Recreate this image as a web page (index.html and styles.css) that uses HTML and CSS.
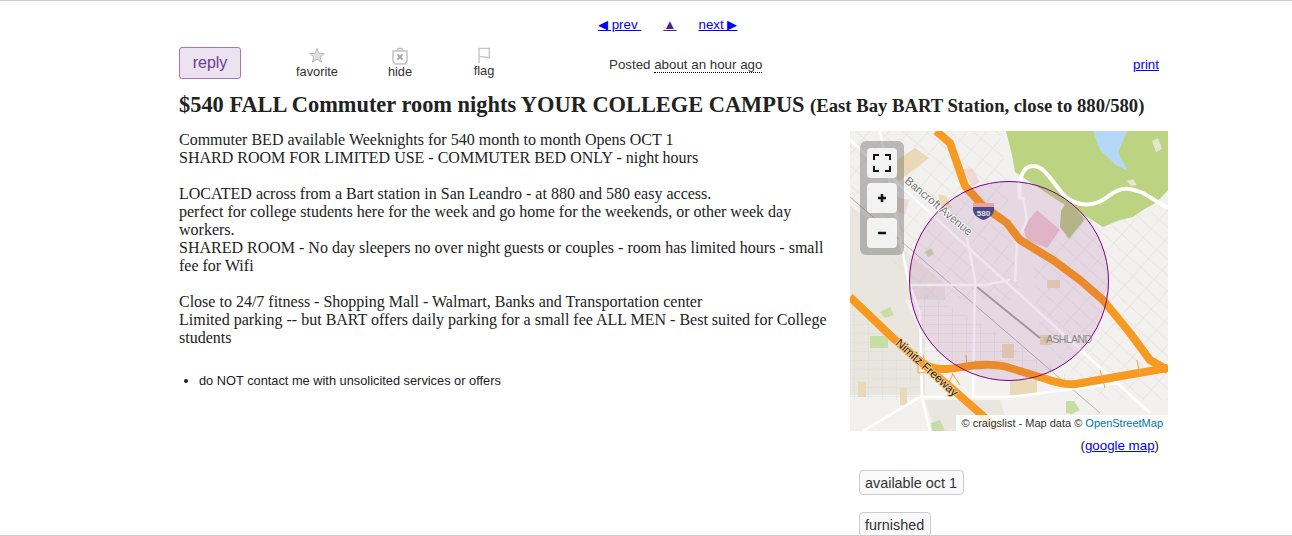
FILE: index.html
```html
<!DOCTYPE html>
<html lang="en">
<head>
<meta charset="utf-8">
<title>$540 FALL Commuter room nights</title>
<link rel="stylesheet" href="styles.css">
</head>
<body>
<div class="page">
  <nav class="prevnext">
    <a href="#" class="nav-prev">◀ prev&nbsp;</a>
    <a href="#" class="nav-up">▲</a>
    <a href="#" class="nav-next">next ▶</a>
  </nav>
  <div class="toolbar">
    <button class="reply">reply</button>
    <div class="tools">
      <div class="tool tool-fav">
        <svg class="tool-icon" viewBox="0 0 18 18"><path class="icon-fill" d="M9 1.500l2.100 5h5.200l-4.100 3.400 1.500 5.400L9 12.200l-4.700 3.100 1.500-5.400L1.700 6.500h5.200z"/></svg>
        <span>favorite</span>
      </div>
      <div class="tool tool-hide">
        <svg class="tool-icon" viewBox="0 0 18 18"><path class="icon-line" d="M2 4h14v10l-2 3H4l-2-3zM6 4l1-2.500h4L12 4"/><path class="icon-x" d="M6.500 7.500l5 5M11.500 7.500l-5 5"/></svg>
        <span>hide</span>
      </div>
      <div class="tool tool-flag">
        <svg class="tool-icon" viewBox="0 0 18 18"><path class="icon-line" d="M3.500 18V1.500h11.500v10.500L3.500 10.500"/></svg>
        <span>flag</span>
      </div>
    </div>
    <div class="posted">Posted <time>about an hour ago</time></div>
    <a href="#" class="print">print</a>
  </div>
  <h1 class="title">$540 FALL Commuter room nights YOUR COLLEGE CAMPUS <small>(East Bay BART Station, close to 880/580)</small></h1>
  <div class="content">
    <div class="body-col">
      <p class="post">Commuter BED available Weeknights for 540 month to month Opens OCT 1<br>
SHARD ROOM FOR LIMITED USE - COMMUTER BED ONLY - night hours<br>
<br>
LOCATED across from a Bart station in San Leandro - at 880 and 580 easy access.<br>
perfect for college students here for the week and go home for the weekends, or other week day workers.<br>
SHARED ROOM - No day sleepers no over night guests or couples - room has limited hours - small fee for Wifi<br>
<br>
Close to 24/7 fitness - Shopping Mall - Walmart, Banks and Transportation center<br>
Limited parking -- but BART offers daily parking for a small fee ALL MEN - Best suited for College students</p>
      <ul class="notices"><li>do NOT contact me with unsolicited services or offers</li></ul>
    </div>
    <aside class="side">
      <div class="map">
        <svg class="map-svg" viewBox="850 131 318 300" aria-label="map">
          <defs>
            <pattern id="grid-a" width="15" height="15" patternUnits="userSpaceOnUse" patternTransform="rotate(40)"><path class="street" d="M0 0H15M0 0V15"/></pattern>
            <pattern id="grid-b" width="14" height="9" patternUnits="userSpaceOnUse"><path class="street" d="M0 0H14M0 0V9"/></pattern>
            <pattern id="grid-c" width="12" height="18" patternUnits="userSpaceOnUse" patternTransform="rotate(-48)"><path class="street" d="M0 0H12M0 0V18"/></pattern>
          </defs>
          <rect class="land" x="850" y="131" width="318" height="300"/>
          <path class="land-dark" d="M850 205L945 285V300H905L925 340V395H850Z"/>
          <path class="land-dark" d="M925 400H1000L1010 431H935Z"/>
          <path class="fill-a" d="M850 131H1000L1020 300L920 300L850 200Z"/>
          <path class="fill-b" d="M850 300L920 360V400H850Z"/>
          <path class="fill-c" d="M1030 230L1168 210V400H1100L1040 340Z"/>
          <path class="fill-b" d="M910 285L1010 340L1090 390L1000 370L930 370Z"/>
          <path class="tan" d="M897 160L915 148L929 158L899 181L897 178Z"/>
          <path class="tan" d="M938 194L946 196L952 208L941 208Z"/>
          <path class="pinkish" d="M893 196L909 200L905 215L893 209Z"/>
          <path class="pinkish" d="M963 169L972 168L980 182L972 187Z"/>
          <path class="tan" d="M858 382H866V397H858Z"/>
          <path class="tan" d="M900 388H907V405H900Z"/>
          <path class="tan" d="M1002 344H1014V358H1002Z"/>
          <path class="tan" d="M1010 380H1037V395H1010Z"/>
          <path class="tan" d="M1040 335H1052V345H1040Z"/>
          <path class="tan" d="M1047 280H1060V288H1047Z"/>
          <path class="park" d="M1006 131H1168V190L1157 202L1143 210L1133 217L1120 220L1103 227L1087 217L1060 202L1015 172L1012 155Z"/>
          <path class="lake" d="M1093 131H1127L1118 153L1128 171L1116 165L1100 150Z"/>
          <path class="sand" d="M1152 141L1158 138L1162 149L1156 152Z"/>
          <path class="sand" d="M1127 181L1133 179L1137 185L1131 186Z"/>
          <path class="park-dark" d="M1061 211L1067 201L1085 219L1069 239L1060 227Z"/>
          <path class="pink" d="M1023 227L1037 210L1060 230L1047 248L1027 240Z"/>
          <path class="park-soft" d="M870 336H888V348H870Z"/>
          <path class="park-soft" d="M880 312L890 307L894 315L885 318Z"/>
          <path class="park-soft" d="M925 252L931 248L934 254L928 257Z"/>
          <path class="park-soft" d="M931 423L940 420L945 431H932Z"/>
          <path class="park-soft" d="M1066 401H1074L1080 410L1072 414L1066 413Z"/>
          <path class="park-soft" d="M1043 337H1048V342H1043Z"/>
          <path class="rail" d="M850 197L1100 413"/>
          <path class="rail-dark" d="M977 287L1040 338"/>
          <path class="road" d="M850 140L1150 413"/>
          <path class="road" d="M880 131L908 280L920 313L922 397L930 431"/>
          <path class="road" d="M967 237L975 280L973 397"/>
          <path class="road" d="M863 431L920 397H1010L1120 383"/>
          <path class="road" d="M910 285H985L1010 280"/>
          <path class="road" d="M1108 302L1150 354"/>
          <path class="road-wide" d="M1020 200C1018 180 1022 166 1033 166C1046 166 1053 185 1067 198C1080 207 1096 207 1110 195C1122 186 1130 188 1143 193L1168 208"/>
          <path class="road" d="M1023 197L1027 220L1017 243L1015 282"/>
          <path class="hwy" d="M936 131L950 143L965 186L983 206L1007 223L1020 240L1053 260L1080 280L1103 300L1130 333L1150 360L1168 370"/>
          <path class="hwy" d="M850 297L893 338L957 393L1000 431"/>
          <path class="hwy" d="M923 363C935 372 950 369 963 367C980 364 1000 364 1010 368L1043 378C1060 384 1068 385 1076 384L1110 378L1168 368"/>
          <path class="ramp" d="M923 355L928 372L918 373V362M966 355L967 368M953 374L945 390M952 373L960 385M1137 360L1140 375M1100 370L1105 388"/>
          <circle class="radius" cx="1009" cy="281" r="99.500"/>
          <g class="shield">
            <path class="shield-top" d="M973 203H994L994 208H973Z"/>
            <path class="shield-body" d="M973 207H994C995 214 990 218 983.500 220C977 218 972 214 973 207Z"/>
            <text class="shield-text" x="983.500" y="216">580</text>
          </g>
          <text class="label-ave" transform="translate(904 182) rotate(40)">Bancroft Avenue</text>
          <text class="label-fwy" transform="translate(895 344) rotate(42)">Nimitz Freeway</text>
          <text class="label-town" x="1046" y="343">ASHLAND</text>
        </svg>
        <div class="zoombar">
          <button class="zoombtn" aria-label="full screen"><svg class="zoomicon" viewBox="0 0 18 18"><path class="corner" d="M1 6V1h5M12 1h5v5M17 12v5h-5M6 17H1v-5"/></svg></button>
          <button class="zoombtn" aria-label="zoom in"><svg class="zoomicon" viewBox="0 0 18 18"><path class="sign" d="M9 5v8M5 9h8"/></svg></button>
          <button class="zoombtn" aria-label="zoom out"><svg class="zoomicon" viewBox="0 0 18 18"><path class="sign" d="M5 9h8"/></svg></button>
        </div>
        <div class="attribution">© craigslist - Map data © <a href="#">OpenStreetMap</a></div>
      </div>
      <div class="gmap">(<a href="#">google map</a>)</div>
      <div class="tags">
        <span class="tag">available oct 1</span>
        <span class="tag">furnished</span>
      </div>
    </aside>
  </div>
</div>
</body>
</html>
```
FILE: styles.css
```css
html, body { margin: 0; padding: 0; background: #fff; }
.page {
  box-sizing: border-box;
  height: 536px;
  overflow: hidden;
  border-top: 1px solid #ccc;
  border-bottom: 1px solid #ccc;
  font-family: "Liberation Sans", Arial, sans-serif;
  color: #222;
  padding: 0 124px 0 179px;
}
a { color: #00f; }
.prevnext {
  display: flex;
  gap: 22px;
  height: 46px;
  padding: 16px 0 0 419px;
  box-sizing: border-box;
  font-size: 13.333px;
  line-height: 16px;
}
.nav-up { color: #551a8b; }
.toolbar { display: flex; height: 32px; font-size: 12.800px; }
.reply {
  box-sizing: border-box;
  width: 62px;
  height: 32px;
  padding: 0;
  border: 1px solid #ab72c4;
  border-radius: 3px;
  background: #ede2f0;
  color: #6a3c8c;
  font: 16px "Liberation Sans", Arial, sans-serif;
}
.tools { display: flex; width: 368px; }
.tool { display: flex; flex-direction: column; align-items: center; line-height: 14px; color: #333; }
.tool-fav { margin-left: 46px; width: 60px; }
.tool-hide { margin-left: 31px; width: 44px; padding-top: 1px; }
.tool-flag { margin-left: 40px; width: 44px; }
.tool-icon { width: 18px; height: 18px; display: block; }
.tool-flag .tool-icon { margin-top: -1px; height: 18px; width: 16px; }
.tool-hide .tool-icon { margin-top: -1px; }
.icon-fill { fill: #e0e0e0; stroke: #bbb; stroke-width: 1; }
.icon-line { fill: none; stroke: #c4c4c4; stroke-width: 1.500; }
.icon-x { fill: none; stroke: #aaa; stroke-width: 2; }
.posted { padding-top: 10px; font-size: 13.333px; line-height: 16px; color: #333; white-space: nowrap; }
.posted time { border-bottom: 1px dotted #000; }
.print { margin-left: auto; margin-right: 9px; padding-top: 10px; font-size: 13.333px; line-height: 16px; }
.title {
  margin: 0;
  padding-top: 14px;
  height: 38px;
  font: bold 22.400px/24px "Liberation Serif", "Times New Roman", serif;
  white-space: nowrap;
  color: #222;
}
.title small { font-size: 18.667px; color: #222; }
.content { display: flex; }
.body-col { width: 671px; }
.post {
  margin: 0;
  width: 650px;
  font: 16px/18px "Liberation Serif", "Times New Roman", serif;
  color: #222;
}
.notices { margin: 25px 0 0; padding-left: 20px; font-size: 12.800px; line-height: 18px; }
.side { width: 318px; flex: none; }
.map { position: relative; width: 318px; height: 300px; overflow: hidden; }
.map-svg { display: block; width: 318px; height: 300px; }
.land { fill: #f2f1ef; }
.land-dark { fill: #e9e6df; }
.fill-a { fill: url(#grid-a); }
.fill-b { fill: url(#grid-b); }
.fill-c { fill: url(#grid-c); }
.street { fill: none; stroke: #dcd9d1; stroke-width: .8; }
.tan { fill: #ead9b6; }
.pinkish { fill: #f1d9d3; }
.park { fill: #bcd382; }
.park-dark { fill: #bcc98b; }
.park-soft { fill: #c6dda4; }
.lake { fill: #b5d8f8; }
.sand { fill: #e6e6cf; }
.pink { fill: #ecc8ce; }
.rail { fill: none; stroke: #b9b6b0; stroke-width: 1; }
.rail-dark { fill: none; stroke: #a8a3a6; stroke-width: 2; }
.road { fill: none; stroke: #fff; stroke-width: 2.500; }
.road-wide { fill: none; stroke: #fff; stroke-width: 4; }
.hwy { fill: none; stroke: #f79a22; stroke-width: 8; stroke-linejoin: round; }
.ramp { fill: none; stroke: #f7a436; stroke-width: 1; }
.radius { fill: #800080; fill-opacity: .1; stroke: #800080; stroke-width: 1; }
.shield-top { fill: #e9a3a0; }
.shield-body { fill: #4b4a85; }
.shield-text { font: bold 8px "Liberation Sans", Arial, sans-serif; fill: #e4e0ea; text-anchor: middle; }
.label-ave { font: 11.500px "Liberation Sans", Arial, sans-serif; fill: #777; paint-order: stroke; stroke: #fff; stroke-width: 1.500; }
.label-fwy { font: 11.500px "Liberation Sans", Arial, sans-serif; fill: #222; paint-order: stroke; stroke: #fbc98a; stroke-width: 2; }
.label-town { font: 10.500px "Liberation Sans", Arial, sans-serif; letter-spacing: -.6px; fill: #888; }
.zoombar {
  position: absolute;
  left: 10px;
  top: 10px;
  display: flex;
  flex-direction: column;
  gap: 5px;
  box-sizing: border-box;
  width: 44px;
  height: 114px;
  padding: 7px;
  border-radius: 6px;
  background: rgba(100, 100, 100, .4);
}
.zoombtn {
  display: flex;
  align-items: center;
  justify-content: center;
  width: 30px;
  height: 30px;
  padding: 0;
  border: 0;
  border-radius: 4px;
  background: rgba(245, 245, 245, .95);
}
.zoomicon { width: 18px; height: 18px; display: block; }
.corner, .sign { fill: none; stroke: #111; stroke-width: 2; }
.sign { stroke-width: 2.500; }
.attribution {
  position: absolute;
  right: 0;
  bottom: 0;
  padding: 0 5px 0 6px;
  height: 16px;
  background: rgba(255, 255, 255, .85);
  font-size: 11px;
  line-height: 16px;
  color: #333;
  white-space: nowrap;
}
.attribution a { color: #0078a8; text-decoration: none; }
.gmap { text-align: right; padding-right: 9px; margin-top: 7px; font-size: 13.333px; line-height: 16px; }
.tags { display: flex; flex-direction: column; align-items: flex-start; gap: 17px; margin: 16px 0 0 9px; }
.tag {
  box-sizing: border-box;
  height: 25px;
  padding: 0 6px 0 5px;
  border: 1px solid #ccc;
  border-radius: 4px;
  background: #f9f9f9;
  font-size: 14.400px;
  line-height: 24px;
  color: #333;
}
```
